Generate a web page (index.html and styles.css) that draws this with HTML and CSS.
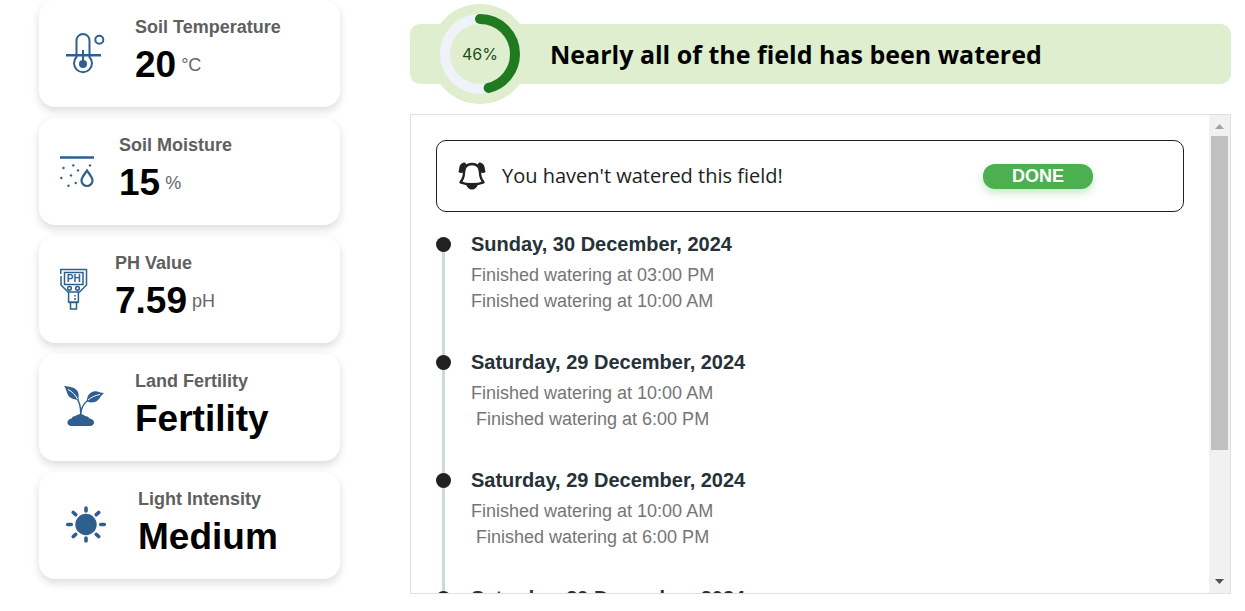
FILE: index.html
```html
<!DOCTYPE html>
<html lang="en">
<head>
<meta charset="utf-8">
<title>Field watering</title>
<link rel="stylesheet" href="styles.css">
</head>
<body>
<div class="layout">
  <aside class="sensors">
    <article class="card">
      <svg class="icon" width="52" height="48" viewBox="0 0 52 48" aria-hidden="true">
        <g fill="none" stroke="currentColor" stroke-width="2">
          <path d="M17.500 27V10.500a6.500 6.500 0 0 1 13 0V27a9 9 0 1 1-13 0z"/>
          <path d="M7 25.300h35" stroke-width="2.600"/>
          <path d="M24 20v14"/>
          <circle cx="40.300" cy="9.700" r="4"/>
        </g>
        <circle cx="24" cy="34" r="4" fill="currentColor"/>
      </svg>
      <div class="reading">
        <h3 class="label">Soil Temperature</h3>
        <p class="value">20 <span class="unit">°C</span></p>
      </div>
    </article>
    <article class="card">
      <svg class="icon" width="36" height="48" viewBox="0 0 36 48" aria-hidden="true">
        <path d="M1 9.500h34" fill="none" stroke="currentColor" stroke-width="2.600"/>
        <g fill="currentColor">
          <circle cx="4.500" cy="20" r="1.200"/><circle cx="14.300" cy="17.400" r="1.200"/>
          <circle cx="31" cy="17.400" r="1.200"/><circle cx="19" cy="22.400" r="1.200"/>
          <circle cx="12" cy="27.400" r="1.200"/><circle cx="2.300" cy="30" r="1.200"/>
          <circle cx="9.500" cy="37.700" r="1.200"/><circle cx="16.700" cy="35" r="1.200"/>
        </g>
        <path d="M28 22.500c2.500 4 5.500 6.800 5.500 10a5.500 5.500 0 0 1-11 0c0-3.200 3-6 5.500-10z" fill="none" stroke="currentColor" stroke-width="2.200"/>
      </svg>
      <div class="reading">
        <h3 class="label">Soil Moisture</h3>
        <p class="value">15 <span class="unit">%</span></p>
      </div>
    </article>
    <article class="card">
      <svg class="icon" width="32" height="48" viewBox="0 0 32 48" aria-hidden="true">
        <g fill="none" stroke="currentColor" stroke-width="1.500">
          <path d="M1.800 8V3.500h25.700V19l-7 7h-11.500l-7-7v-9"/>
          <path d="M5.500 6.500h18.500v12H5.500z"/>
          <circle cx="10.500" cy="22.300" r="1.900"/><circle cx="18.500" cy="22.300" r="1.900"/>
          <path d="M9.600 26v10h9.800V26M11.500 37v6h6v-6M9.600 36.500h9.800M16 29v1.500M16 32v2"/>
        </g>
        <text class="screen" x="14.700" y="16" text-anchor="middle">PH</text>
      </svg>
      <div class="reading">
        <h3 class="label">PH Value</h3>
        <p class="value">7.59 <span class="unit">pH</span></p>
      </div>
    </article>
    <article class="card">
      <svg class="icon" width="52" height="48" viewBox="0 0 52 48" aria-hidden="true">
        <g fill="currentColor">
          <path d="M5 2c6 .5 12 1.500 14 6 1 2.500.5 5 .5 8-4-.5-8.500-1.500-10.500-5C7.500 8.500 7.500 5 5 2z"/>
          <path d="M28 17.500c-.5-5 2.500-9.500 7.500-10.300 3.500-.4 6 1.800 9.500 1.800-3 2-3.500 5-6.500 7.500-3 2.400-7 2.500-10.500 1z"/>
          <path d="M13 42c-4 0-5.500-3-4-5.300 1-1.800 2.500-1.700 3.500-2.200 1-2.500 2.500-2 4-2.500 2-2.500 8-2.500 9.500 0 1.500.5 3.300 0 4.500 2.500 1.500.5 3 .5 4 2.200 1.500 2.300-.3 5.300-3.800 5.300z"/>
        </g>
        <path d="M9 5.500c4 2 7.500 5.500 9.500 9.500M41 10.500c-4.500.8-8.500 2.500-12 5.500" fill="none" stroke="#fff" stroke-width="1"/>
        <path d="M18.500 15.500C22 20 21.500 25 21.700 32c0-7 2.300-12 6.800-15.500" fill="none" stroke="currentColor" stroke-width="1.400"/>
      </svg>
      <div class="reading">
        <h3 class="label">Land Fertility</h3>
        <p class="value">Fertility</p>
      </div>
    </article>
    <article class="card">
      <svg class="icon" width="55" height="48" viewBox="0 0 55 48" aria-hidden="true">
        <circle cx="27" cy="22.500" r="10.700" fill="currentColor"/>
        <path d="M27 6v3M27 36v3M8.700 22.500h3.600M41.700 22.500h3.600M14.300 10.500l2.400 2.200M39.700 10.500l-2.400 2.200M14.300 34.500l2.400-2.200M39.700 34.500l-2.400-2.200" fill="none" stroke="currentColor" stroke-width="3.600" stroke-linecap="round"/>
      </svg>
      <div class="reading">
        <h3 class="label">Light Intensity</h3>
        <p class="value">Medium</p>
      </div>
    </article>
  </aside>

  <main class="content">
    <header class="banner">
      <svg class="gauge" width="100" height="100" viewBox="0 0 100 100" role="img" aria-label="46%">
        <circle cx="50" cy="50" r="50" fill="#dfeece"/>
        <circle cx="50" cy="50" r="35" fill="none" stroke="#eff2f9" stroke-width="10"/>
        <circle cx="50" cy="50" r="35" fill="none" stroke="#207a20" stroke-width="10" stroke-linecap="round" pathLength="100" stroke-dasharray="46 100" transform="rotate(-90 50 50)"/>
        <text class="percent" x="50" y="56" text-anchor="middle">46%</text>
      </svg>
      <h1 class="headline">Nearly all of the field has been watered</h1>
    </header>

    <section class="panel">
      <div class="feed">
        <div class="alert">
          <svg class="bell" width="28" height="28" viewBox="0 0 28 28" aria-hidden="true">
            <path d="M14 2c-5.500 0-8 3.800-8 8.300 0 5-1 7-3.500 10 3.500 1.500 7.500 2 11.500 2s8-.5 11.500-2c-2.500-3-3.500-5-3.500-10C22 5.800 19.500 2 14 2z" fill="none" stroke="currentColor" stroke-width="2.400" stroke-linejoin="round"/>
            <path d="M8 21.500h12c-.6 3.500-2.700 6-6 6s-5.400-2.500-6-6zM7 .5C3.500.5 1.500 3 1.200 6.500L.5 10c1.500 1.200 3.500 1.200 5 0C5.500 6.500 6.500 4.300 8.500 2.700zM21 .5c3.500 0 5.500 2.500 5.800 6l.7 3.500c-1.500 1.200-3.500 1.200-5 0 0-3.500-1-5.700-3-7.300z" fill="currentColor"/>
          </svg>
          <p class="message">You haven't watered this field!</p>
          <button class="done" type="button">DONE</button>
        </div>
        <ol class="timeline">
          <li class="event">
            <h2 class="date">Sunday, 30 December, 2024</h2>
            <p class="entry">Finished watering at 03:00 PM</p>
            <p class="entry">Finished watering at 10:00 AM</p>
          </li>
          <li class="event">
            <h2 class="date">Saturday, 29 December, 2024</h2>
            <p class="entry">Finished watering at 10:00 AM</p>
            <p class="entry">&nbsp;Finished watering at 6:00 PM</p>
          </li>
          <li class="event">
            <h2 class="date">Saturday, 29 December, 2024</h2>
            <p class="entry">Finished watering at 10:00 AM</p>
            <p class="entry">&nbsp;Finished watering at 6:00 PM</p>
          </li>
          <li class="event">
            <h2 class="date">Saturday, 29 December, 2024</h2>
          </li>
        </ol>
      </div>
      <div class="scrollbar" aria-hidden="true">
        <svg width="21" height="21" viewBox="0 0 21 21"><path d="M6 14l4.500-5 4.500 5z" fill="#a3a3a3"/></svg>
        <div class="track"><div class="thumb"></div></div>
        <svg width="21" height="21" viewBox="0 0 21 21"><path d="M6 7l4.500 5L15 7z" fill="#505050"/></svg>
      </div>
    </section>
  </main>
</div>
</body>
</html>
```
FILE: styles.css
```css
* {
  box-sizing: border-box;
  margin: 0;
}

body {
  background: #fff;
  color: #000;
  font-family: "Liberation Sans", Arial, sans-serif;
}

.layout {
  display: grid;
  grid-template-columns: 301px minmax(0, 1fr);
  column-gap: 70px;
  padding: 0 14px 16px 39px;
}

.sensors {
  display: flex;
  flex-direction: column;
  gap: 11px;
}

.card {
  display: flex;
  align-items: center;
  gap: 24px;
  min-height: 107px;
  padding: 0 20px;
  border-radius: 16px;
  background: #fff;
  box-shadow: 0 4px 8px rgba(0, 0, 0, 0.14);
}

.icon {
  flex: none;
  color: #2f5f8f;
}

.screen {
  fill: currentColor;
  font-size: 10px;
  font-weight: bold;
}

.reading {
  padding-bottom: 4px;
}

.label {
  color: #5f5f5f;
  font-size: 18px;
  line-height: 22px;
}

.value {
  display: flex;
  align-items: center;
  gap: 5px;
  margin-top: 4px;
  font-size: 37px;
  font-weight: bold;
  line-height: 46px;
  white-space: nowrap;
}

.unit {
  color: #666;
  font-size: 18px;
  font-weight: normal;
  line-height: 22px;
}

.content {
  padding-top: 24px;
}

.banner {
  display: flex;
  align-items: center;
  gap: 20px;
  height: 60px;
  padding: 0 20px;
  border-radius: 10px;
  background: #dfeece;
}

.gauge {
  flex: none;
}

.percent {
  fill: #1c4d1c;
  font-family: Inter, sans-serif;
  font-size: 16px;
}

.headline {
  font-family: "Open Sans", sans-serif;
  font-size: 25px;
  font-weight: 700;
  line-height: 36px;
}

.panel {
  display: flex;
  height: 480px;
  margin-top: 30px;
  overflow: hidden;
  border: 1px solid #e0e0e0;
}

.feed {
  flex: 1;
  min-width: 0;
  padding: 25px;
}

.alert {
  display: flex;
  align-items: center;
  min-height: 72px;
  padding: 0 90px 0 21px;
  border: 1px solid #212121;
  border-radius: 10px;
  color: #212121;
}

.bell {
  flex: none;
}

.message {
  flex: 1;
  margin-left: 16px;
  font-family: "Open Sans", sans-serif;
  font-size: 20px;
  line-height: 28px;
}

.done {
  width: 110px;
  height: 25px;
  padding: 0;
  border: 0;
  border-radius: 12px;
  background: #4caf50;
  color: #fff;
  font: bold 18px/24px "Liberation Sans", Arial, sans-serif;
  box-shadow: 0 4px 8px rgba(76, 175, 80, 0.3);
}

.timeline {
  margin-top: 20px;
  padding: 0;
  list-style: none;
}

.event {
  position: relative;
  min-height: 118px;
  padding-left: 35px;
}

.event::before {
  content: "";
  position: absolute;
  top: 12px;
  left: 6px;
  width: 3px;
  height: 100%;
  background: #cfd8dc;
}

.event::after {
  content: "";
  position: absolute;
  top: 5px;
  left: 0;
  z-index: 1;
  width: 15px;
  height: 15px;
  border-radius: 50%;
  background: #212121;
}

.date {
  margin-bottom: 5px;
  color: #263238;
  font-size: 20px;
  line-height: 25px;
}

.entry {
  color: #757575;
  font-size: 18px;
  line-height: 26px;
}

.scrollbar {
  display: flex;
  flex: none;
  flex-direction: column;
  width: 21px;
  background: #f1f1f1;
}

.track {
  flex: 1;
  padding: 0 2px;
}

.thumb {
  height: 72%;
  background: #c1c1c1;
}
```
